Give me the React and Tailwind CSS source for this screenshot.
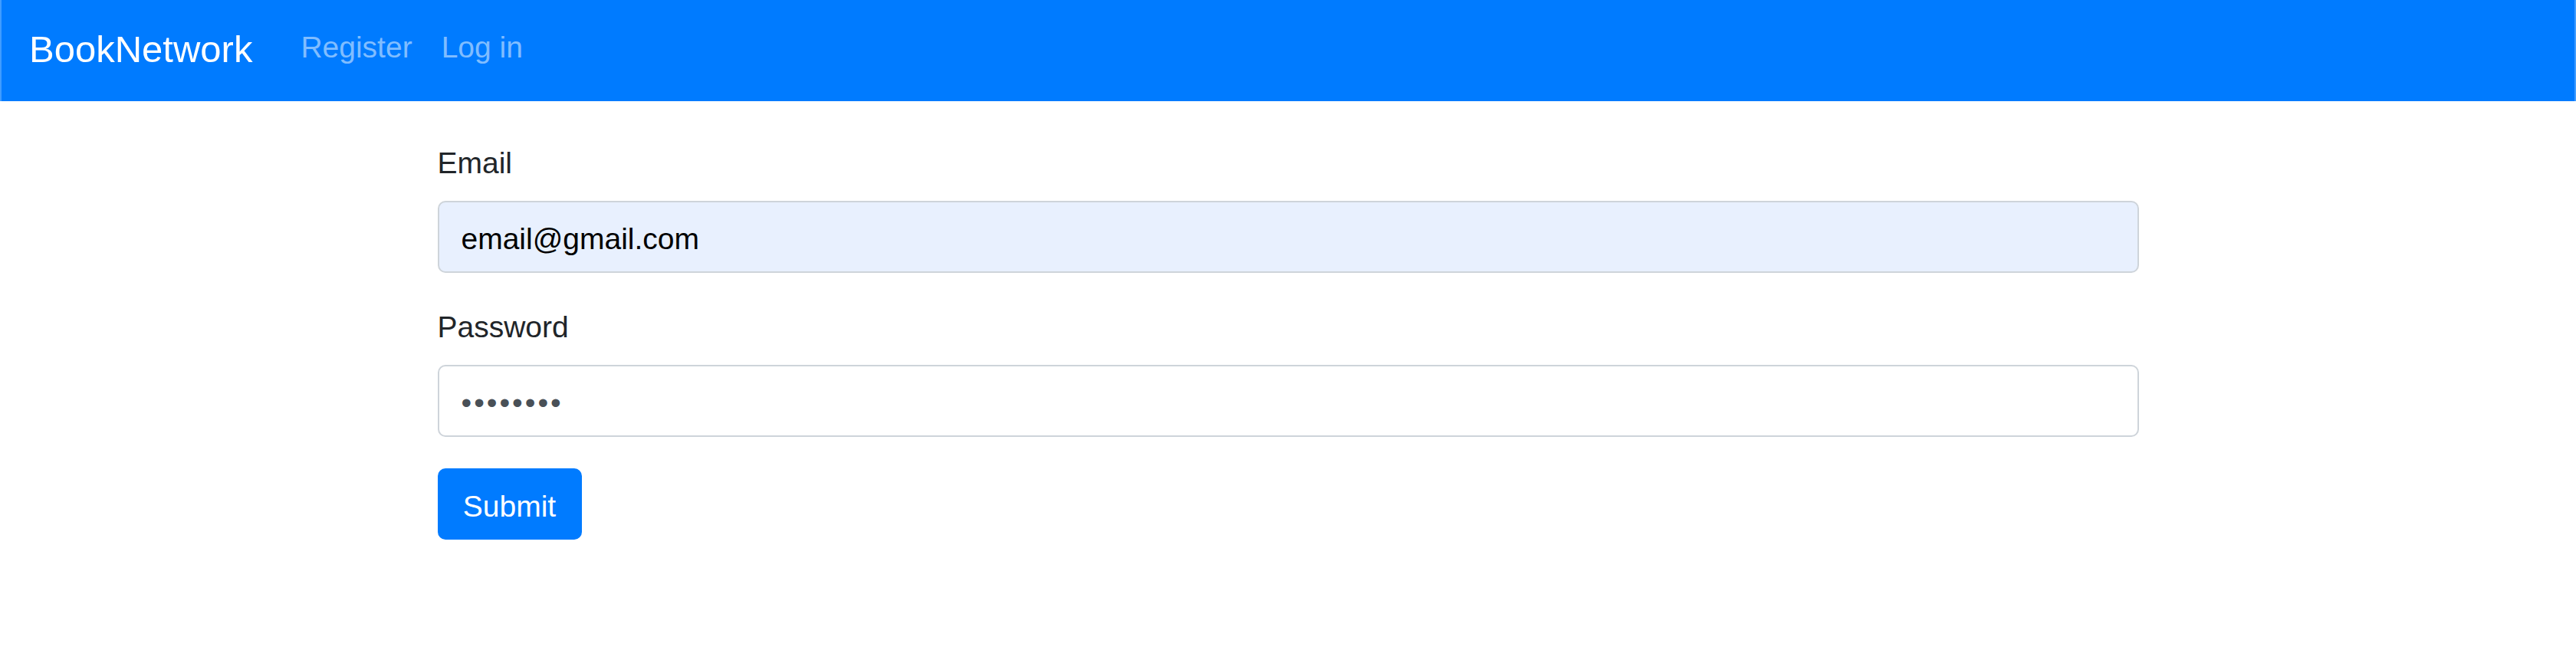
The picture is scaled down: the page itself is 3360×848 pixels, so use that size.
// Login page: blue top bar with brand + links, then a centred form
// with email / password fields and a submit button.
const font = { fontFamily: '"Liberation Sans", Arial, sans-serif' }

function Navbar() {
  return (
    <nav className="h-[132px] bg-[#007bff] border-x-2 border-[#3f9cff] flex items-start pt-[40px] pl-[36px]">
      <a href="#" className="text-[49px] leading-none text-white mr-[44px] whitespace-nowrap">
        BookNetwork
      </a>
      <ul className="flex items-start mt-[2px]">
        <li>
          <a href="#" className="block px-[19px] text-[39px] leading-none text-[#80bdff]">
            Register
          </a>
        </li>
        <li>
          <a href="#" className="block px-[19px] text-[39px] leading-none text-[#80bdff]">
            Log in
          </a>
        </li>
      </ul>
    </nav>
  )
}

function Field({ label, type, value, autofilled }) {
  return (
    <div className="mb-[41px]">
      <label className="block text-[39px] leading-[59px] text-[#212529] mb-[20px]">{label}</label>
      <input
        type={type}
        defaultValue={value}
        readOnly
        style={font}
        className={
          autofilled
            ? 'block w-full h-[94px] border-2 border-[#ced4da] rounded-[10px] bg-[#e8f0fe] px-[29px] pt-[5px] text-[39px] text-black outline-none'
            : 'block w-full h-[94px] border-2 border-[#ced4da] rounded-[10px] bg-white px-[29px] pt-[5px] text-[39px] tracking-[3px] text-[#495057] outline-none'
        }
      />
    </div>
  )
}

export default function App() {
  return (
    <div className="min-h-[848px] bg-white" style={font}>
      <Navbar />
      <main className="w-[2219px] mx-auto pt-[51px]">
        <form onSubmit={(e) => e.preventDefault()}>
          <Field label="Email" type="email" value="email@gmail.com" autofilled />
          <Field label="Password" type="password" value="12345678" />
          <button
            type="submit"
            style={font}
            className="w-[188px] h-[93px] rounded-[10px] bg-[#007bff] text-white text-[39px] flex items-center justify-center pt-[8px]"
          >
            Submit
          </button>
        </form>
      </main>
    </div>
  )
}
